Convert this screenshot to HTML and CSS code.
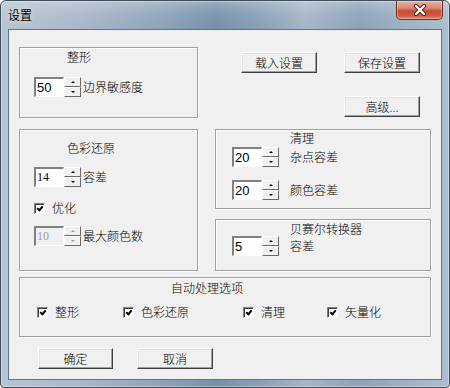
FILE: index.html
```html
<!DOCTYPE html>
<html lang="zh-CN">
<head>
    <meta charset="UTF-8">
    <title>设置</title>
    <link rel="stylesheet" href="styles.css">
</head>
<body>
    <div class="window">
        <div class="titlebar">
            <span class="title">设置</span>
            <button class="close-btn" aria-label="关闭">
                <svg width="14" height="12" viewBox="0 0 14 12">
                    <path d="M3 2 L11 10 M11 2 L3 10" stroke="#5a1a12" stroke-width="4.2" stroke-linecap="round"/>
                    <path d="M3 2 L11 10 M11 2 L3 10" stroke="#ffffff" stroke-width="2.4" stroke-linecap="round"/>
                </svg>
            </button>
        </div>

        <div class="client">
            <div class="columns">
                <div class="col-left">
                    <div class="group group-shape">
                        <div class="group-title">整形</div>
                        <div class="field-row">
                            <div class="spin">
                                <span class="spin-input">50</span>
                                <span class="spin-btns"><span class="spin-btn up"></span><span class="spin-btn down"></span></span>
                            </div>
                            <span class="field-label">边界敏感度</span>
                        </div>
                    </div>

                    <div class="group group-color">
                        <div class="group-title">色彩还原</div>
                        <div class="field-row">
                            <div class="spin">
                                <span class="spin-input serif">14</span>
                                <span class="spin-btns"><span class="spin-btn up"></span><span class="spin-btn down"></span></span>
                            </div>
                            <span class="field-label">容差</span>
                        </div>
                        <label class="check check-optimize">
                            <span class="check-box checked"></span>
                            <span>优化</span>
                        </label>
                        <div class="field-row row-maxcolors">
                            <div class="spin disabled">
                                <span class="spin-input serif">10</span>
                                <span class="spin-btns"><span class="spin-btn up"></span><span class="spin-btn down"></span></span>
                            </div>
                            <span class="field-label">最大颜色数</span>
                        </div>
                    </div>
                </div>

                <div class="col-right">
                    <div class="top-buttons">
                        <button class="btn">载入设置</button>
                        <button class="btn">保存设置</button>
                        <button class="btn btn-advanced">高级...</button>
                    </div>

                    <div class="group group-clean">
                        <div class="group-title">清理</div>
                        <div class="field-row">
                            <div class="spin">
                                <span class="spin-input">20</span>
                                <span class="spin-btns"><span class="spin-btn up"></span><span class="spin-btn down"></span></span>
                            </div>
                            <span class="field-label wide">杂点容差</span>
                        </div>
                        <div class="field-row row-second">
                            <div class="spin">
                                <span class="spin-input">20</span>
                                <span class="spin-btns"><span class="spin-btn up"></span><span class="spin-btn down"></span></span>
                            </div>
                            <span class="field-label wide">颜色容差</span>
                        </div>
                    </div>

                    <div class="group group-bezier">
                        <div class="group-title">贝赛尔转换器</div>
                        <div class="field-row">
                            <div class="spin">
                                <span class="spin-input">5</span>
                                <span class="spin-btns"><span class="spin-btn up"></span><span class="spin-btn down"></span></span>
                            </div>
                            <span class="field-label wide">容差</span>
                        </div>
                    </div>
                </div>
            </div>

            <div class="group group-auto">
                <div class="group-title">自动处理选项</div>
                <div class="auto-options">
                    <label class="check"><span class="check-box checked"></span><span>整形</span></label>
                    <label class="check"><span class="check-box checked"></span><span>色彩还原</span></label>
                    <label class="check"><span class="check-box checked"></span><span>清理</span></label>
                    <label class="check"><span class="check-box checked"></span><span>矢量化</span></label>
                </div>
            </div>

            <div class="dialog-buttons">
                <button class="btn btn-ok">确定</button>
                <button class="btn btn-cancel">取消</button>
            </div>
        </div>
    </div>
</body>
</html>
```

FILE: styles.css
```css
body {
    margin: 0;
    background: #ffffff;
    font-family: "Noto Sans CJK SC", "Liberation Sans", sans-serif;
    font-size: 12px;
    font-weight: 300;
    color: #000;
}
.window {
    width: 450px;
    height: 388px;
    box-sizing: border-box;
    border: 1px solid #3e4d5c;
    border-radius: 6px 6px 4px 4px;
    padding: 0 7px 7px;
    display: flex;
    flex-direction: column;
    background:
        linear-gradient(180deg, rgba(255,255,255,0.25) 0px, rgba(255,255,255,0.05) 14px, rgba(0,0,0,0) 28px),
        linear-gradient(90deg, #b7c4d3 0%, #a9b8c9 18%, #8ea3b9 36%, #7690ab 48%, #8aa0b7 58%, #a6b6c7 68%, #8ca2b9 80%, #9fb1c4 90%, #aebdcd 100%);
    box-shadow: inset 0 0 0 1px rgba(255,255,255,0.35);
}
.titlebar {
    height: 28px;
    display: flex;
    justify-content: space-between;
    align-items: flex-start;
    margin-right: -1px;
}
.title {
    padding-top: 6px;
    line-height: 16px;
    font-size: 12px;
    font-weight: 400;
    color: #000;
    text-shadow: 0 0 6px rgba(255,255,255,0.9);
}
.close-btn {
    width: 47px;
    height: 19px;
    padding: 0;
    border: 1px solid #6a2b22;
    border-top: none;
    border-radius: 0 0 5px 5px;
    background: linear-gradient(180deg, #eab0a2 0%, #d98672 40%, #c74c35 55%, #cf5a3e 80%, #e0866a 100%);
    box-shadow: inset 0 0 0 1px rgba(255,255,255,0.35);
    display: flex;
    align-items: center;
    justify-content: center;
}
.client {
    flex: 1;
    background: #f0f0f0;
    border: 1px solid #5f7389;
    padding: 17px 10px 0;
    display: flex;
    flex-direction: column;
}
.columns {
    display: grid;
    grid-template-columns: 179px 216px;
    column-gap: 17px;
}
.col-left, .col-right {
    display: flex;
    flex-direction: column;
}

/* group frames */
.group {
    box-sizing: border-box;
    border: 1px solid #a0a0a0;
    box-shadow: inset 1px 1px 0 #ffffff, 1px 1px 0 #ffffff;
    display: flex;
    flex-direction: column;
}
.group-title {
    line-height: 14px;
    height: 14px;
}
.group-shape {
    height: 71px;
    padding: 2px 0 0 14px;
}
.group-shape .group-title {
    margin-left: 33px;
}
.group-shape .field-row {
    margin-top: 13px;
}
.group-color {
    height: 142px;
    margin-top: 11px;
    padding: 11px 0 0 14px;
}
.group-color .group-title {
    margin-left: 33px;
}
.group-color .field-row {
    margin-top: 12px;
}
.check-optimize {
    margin-top: 14px;
}
.group-color .row-maxcolors {
    margin-top: 11px;
}
.top-buttons {
    height: 82px;
    box-sizing: border-box;
    padding: 5px 0 0 26px;
    display: grid;
    grid-template-columns: 76px 76px;
    grid-template-rows: 21px 21px;
    column-gap: 27px;
    row-gap: 23px;
}
.btn-advanced {
    grid-column: 2;
}
.group-clean {
    height: 80px;
    padding: 1px 0 0 16px;
}
.group-clean .group-title,
.group-bezier .group-title {
    margin-left: 58px;
}
.group-clean .field-row {
    margin-top: 2px;
}
.group-clean .row-second {
    margin-top: 13px;
}
.group-bezier {
    height: 52px;
    margin-top: 10px;
    padding: 2px 0 0 16px;
}

/* spinner */
.field-row {
    display: flex;
    align-items: center;
}
.spin {
    display: flex;
    height: 20px;
}
.spin-input {
    width: 30px;
    height: 20px;
    box-sizing: border-box;
    background: #ffffff;
    border-top: 2px solid #808080;
    border-left: 2px solid #808080;
    border-right: 1px solid #ffffff;
    border-bottom: 1px solid #ffffff;
    padding-left: 1px;
    font-family: "Liberation Sans", Arial, sans-serif;
    font-weight: 400;
    font-size: 13px;
    line-height: 17px;
}
.spin-input.serif {
    font-family: "Liberation Serif", serif;
    font-size: 12px;
}
.spin-btns {
    display: flex;
    flex-direction: column;
    width: 17px;
}
.spin-btn {
    flex: 1;
    box-sizing: border-box;
    background: #f0f0f0;
    border: 1px solid;
    border-color: #ffffff #696969 #696969 #ffffff;
    display: flex;
    align-items: center;
    justify-content: center;
}
.spin-btn::after {
    content: "";
    width: 0;
    height: 0;
    border-left: 2px solid transparent;
    border-right: 2px solid transparent;
}
.spin-btn.up::after {
    border-bottom: 2px solid #000;
}
.spin-btn.down::after {
    border-top: 2px solid #000;
}
.spin.disabled .spin-input {
    background: #f0f0f0;
    color: #a0a0a0;
}
.spin.disabled .spin-btn.up::after {
    border-bottom-color: #a0a0a0;
}
.spin.disabled .spin-btn.down::after {
    border-top-color: #a0a0a0;
}
.field-label {
    margin-left: 2px;
    line-height: 14px;
}
.field-label.wide {
    margin-left: 11px;
}

/* checkbox */
.check {
    display: flex;
    align-items: center;
    height: 14px;
    line-height: 14px;
}
.check-box {
    width: 11px;
    height: 11px;
    box-sizing: border-box;
    background: #ffffff;
    border-top: 1px solid #808080;
    border-left: 1px solid #808080;
    border-right: 1px solid #ffffff;
    border-bottom: 1px solid #ffffff;
    box-shadow: inset 1px 1px 0 #404040;
    margin-right: 7px;
    position: relative;
}
.check-box.checked::after {
    content: "";
    position: absolute;
    left: 3px;
    top: 1px;
    width: 2px;
    height: 4px;
    border-right: 2px solid #000;
    border-bottom: 2px solid #000;
    transform: rotate(40deg);
}

/* auto options */
.group-auto {
    height: 60px;
    margin-top: 6px;
    padding: 3px 0 0 17px;
}
.group-auto .group-title {
    margin-left: 134px;
}
.auto-options {
    margin-top: 10px;
    display: grid;
    grid-template-columns: 86px 120px 84px auto;
}

/* push buttons */
.btn {
    box-sizing: border-box;
    height: 21px;
    padding: 0;
    background: #f0f0f0;
    border: 1px solid;
    border-color: #ffffff #404040 #404040 #ffffff;
    box-shadow: inset -1px -1px 0 #a0a0a0, inset 1px 1px 0 #e3e3e3;
    font-family: "Noto Sans CJK SC", sans-serif;
    font-weight: 300;
    font-size: 12px;
    line-height: 17px;
    color: #000;
}
.dialog-buttons {
    margin: 11px 0 0 19px;
    display: flex;
    gap: 24px;
}
.btn-ok {
    width: 75px;
}
.btn-cancel {
    width: 76px;
}
```
